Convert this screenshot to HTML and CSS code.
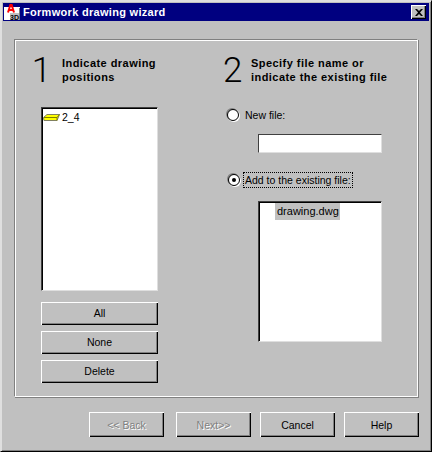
FILE: index.html
```html
<!DOCTYPE html>
<html>
<head>
<meta charset="utf-8">
<title>Formwork drawing wizard</title>
<link rel="stylesheet" href="styles.css">
</head>
<body>

<div class="window">

    <div class="titlebar">
        <svg class="appicon" width="16" height="16" viewBox="0 0 16 16">
            <rect x="0" y="3" width="16" height="13" fill="#fff"/>
            <rect x="15" y="4" width="1" height="12" fill="#808080"/>
            <rect x="6" y="9" width="9" height="7" fill="#c0c0c0"/>
            <path d="M4 8.500 L6.500 0.500 H7.500 L10 8.500 M4.500 6 H9.500" fill="none" stroke="#f00" stroke-width="2"/>
            <text x="6" y="15.500" class="icontext">3D</text>
        </svg>
        <span class="titletext">Formwork drawing wizard</span>
        <div class="closebtn">
            <svg width="8" height="7" viewBox="0 0 8 7">
                <path d="M0 0 L2 0 L4 2 L6 0 L8 0 L5 3.500 L8 7 L6 7 L4 5 L2 7 L0 7 L3 3.500 Z" fill="#000"/>
            </svg>
        </div>
    </div>

    <div class="panel">
        <div class="column left">
            <div class="heading">
                <span class="number">1</span>
                <p>Indicate drawing<br>positions</p>
            </div>
            <div class="listbox positions">
                <div class="listitem">
                    <svg width="17" height="7" viewBox="0 0 17 7">
                        <path d="M0.500 3.500 L4 0.500 H16.500 L14 6.500 H1 Z" fill="#ffff00" stroke="#808060"/>
                        <path d="M1 3.500 H14 L16.500 0.500 M14 3.500 V6.500" fill="none" stroke="#808000"/>
                    </svg>
                    <span>2_4</span>
                </div>
            </div>
            <div class="button wide first">All</div>
            <div class="button wide">None</div>
            <div class="button wide">Delete</div>
        </div>

        <div class="column right">
            <div class="heading">
                <span class="number">2</span>
                <p>Specify file name or<br>indicate the existing file</p>
            </div>
            <div class="radiorow newfile">
                <span class="radio"></span>
                <label class="radiolabel">New file:</label>
            </div>
            <div class="textinput"></div>
            <div class="radiorow addfile">
                <span class="radio checked"></span>
                <label class="radiolabel focused">Add to the existing file:</label>
            </div>
            <div class="listbox files">
                <span class="selected">drawing.dwg</span>
            </div>
        </div>
    </div>

    <div class="footer">
        <div class="button nav disabled back">&lt;&lt; Back</div>
        <div class="button nav disabled">Next&gt;&gt;</div>
        <div class="button nav">Cancel</div>
        <div class="button nav">Help</div>
    </div>

</div>

</body>
</html>
```

FILE: styles.css
```css
html, body {
    height: 100%;
    margin: 0;
    padding: 0;
    background-color: #c0c0c0;
}

body {
    font-family: "Liberation Sans", Arial, sans-serif;
    font-size: 10.5px;
    color: #000;
}

p {
    margin: 0;
}

.window {
    box-sizing: border-box;
    width: 432px;
    height: 452px;
    padding: 1px;
    background-color: #c0c0c0;
    border-right: 1px solid #000;
    border-bottom: 1px solid #000;
    box-shadow: inset 1px 1px 0 #dfdfdf, inset -1px -1px 0 #808080;
    border-top: 1px solid #dfdfdf;
    border-left: 1px solid #dfdfdf;
}

.titlebar {
    display: flex;
    align-items: center;
    height: 18px;
    margin: 1px 1px 0 1px;
    padding: 0 3px 0 1px;
    background-color: #000080;
    color: #fff;
}

.appicon {
    flex: none;
    margin-right: 3px;
}

.icontext {
    font-size: 7px;
    font-weight: bold;
    fill: #000;
}

.titletext {
    flex: 1;
    font-size: 11px;
    font-weight: bold;
    letter-spacing: 0.3px;
}

.closebtn {
    display: flex;
    align-items: center;
    justify-content: center;
    width: 15px;
    height: 14px;
    background-color: #c0c0c0;
    box-shadow: inset 1px 1px 0 #fff, inset -1px -1px 0 #000, inset -2px -2px 0 #808080;
}

.panel {
    box-sizing: border-box;
    display: flex;
    width: 404px;
    height: 358px;
    margin: 18px 0 0 12px;
    border: 1px solid #808080;
    border-right-color: #fff;
    border-bottom-color: #fff;
    box-shadow: inset 1px 1px 0 #fff, 1px 1px 0 #808080;
}

.column {
    display: flex;
    flex-direction: column;
}

.column.left {
    width: 208px;
    padding: 13px 0 0 21px;
    box-sizing: border-box;
}

.column.right {
    box-sizing: border-box;
    padding-top: 13px;
}

.heading {
    display: flex;
    height: 42px;
}

.heading p {
    font-size: 11px;
    font-weight: bold;
    line-height: 14px;
    letter-spacing: 0.45px;
    padding-top: 3px;
}

.number {
    font-family: Roboto, "Liberation Sans", sans-serif;
    font-size: 35px;
    line-height: 36px;
    font-weight: 300;
}

.left .number {
    width: 21px;
    margin-left: -5px;
    text-align: center;
}

.right .number {
    width: 28px;
}

.left .heading p {
    margin-left: 10px;
}

.listbox {
    box-sizing: border-box;
    background-color: #fff;
    border: 1px solid #dfdfdf;
    border-top-color: #404040;
    border-left-color: #404040;
    box-shadow: inset 1px 1px 0 #000;
}

.positions {
    width: 117px;
    height: 184px;
    margin: 12px 0 0 5px;
    padding: 1px 0 0 1px;
}

.listitem {
    display: flex;
    align-items: center;
    gap: 2px;
    height: 16px;
}

.button {
    display: flex;
    align-items: center;
    justify-content: center;
    box-sizing: border-box;
    background-color: #c0c0c0;
    box-shadow: inset 1px 1px 0 #fff, inset -1px -1px 0 #000, inset -2px -2px 0 #808080;
}

.button.wide {
    width: 117px;
    height: 23px;
    margin: 6px 0 0 5px;
    padding-bottom: 2px;
}

.button.first {
    margin-top: 11px;
}

.radiorow {
    display: flex;
    align-items: center;
    height: 16px;
}

.radio {
    box-sizing: border-box;
    width: 12px;
    height: 12px;
    margin-left: 4px;
    border-radius: 50%;
    background-color: #fff;
    border: 1px solid #000;
    box-shadow: -1px -1px 0 #808080, 1px 1px 0 #fff;
    display: flex;
    align-items: center;
    justify-content: center;
}

.radio.checked {
    margin-left: 5px;
    margin-right: -1px;
}

.radio.checked::before {
    content: "";
    width: 4px;
    height: 4px;
    border-radius: 50%;
    background-color: #000;
}

.radiolabel {
    margin-left: 4px;
    padding: 0 1px;
    line-height: 14px;
    border: 1px solid transparent;
}

.radiolabel.focused {
    border: 1px dotted #000;
}

.newfile {
    margin-top: 12px;
}

.textinput {
    box-sizing: border-box;
    width: 124px;
    height: 19px;
    margin: 11px 0 0 35px;
    background-color: #fff;
    border: 1px solid #dfdfdf;
    border-top-color: #404040;
    border-left-color: #404040;
}

.addfile {
    margin-top: 19px;
}

.files {
    width: 124px;
    height: 141px;
    margin: 13px 0 0 35px;
    padding: 1px 0 0 16px;
}

.selected {
    display: inline-block;
    height: 17px;
    padding: 0 1px 0 2px;
    line-height: 17px;
    background-color: #c0c0c0;
    font-size: 11px;
}

.footer {
    display: flex;
    gap: 9px;
    margin: 15px 0 0 87px;
}

.button.nav {
    width: 75px;
    height: 25px;
}

.button.back {
    margin-right: 3px;
}

.button.disabled {
    color: #808080;
    text-shadow: 1px 1px 0 #fff;
}
```
